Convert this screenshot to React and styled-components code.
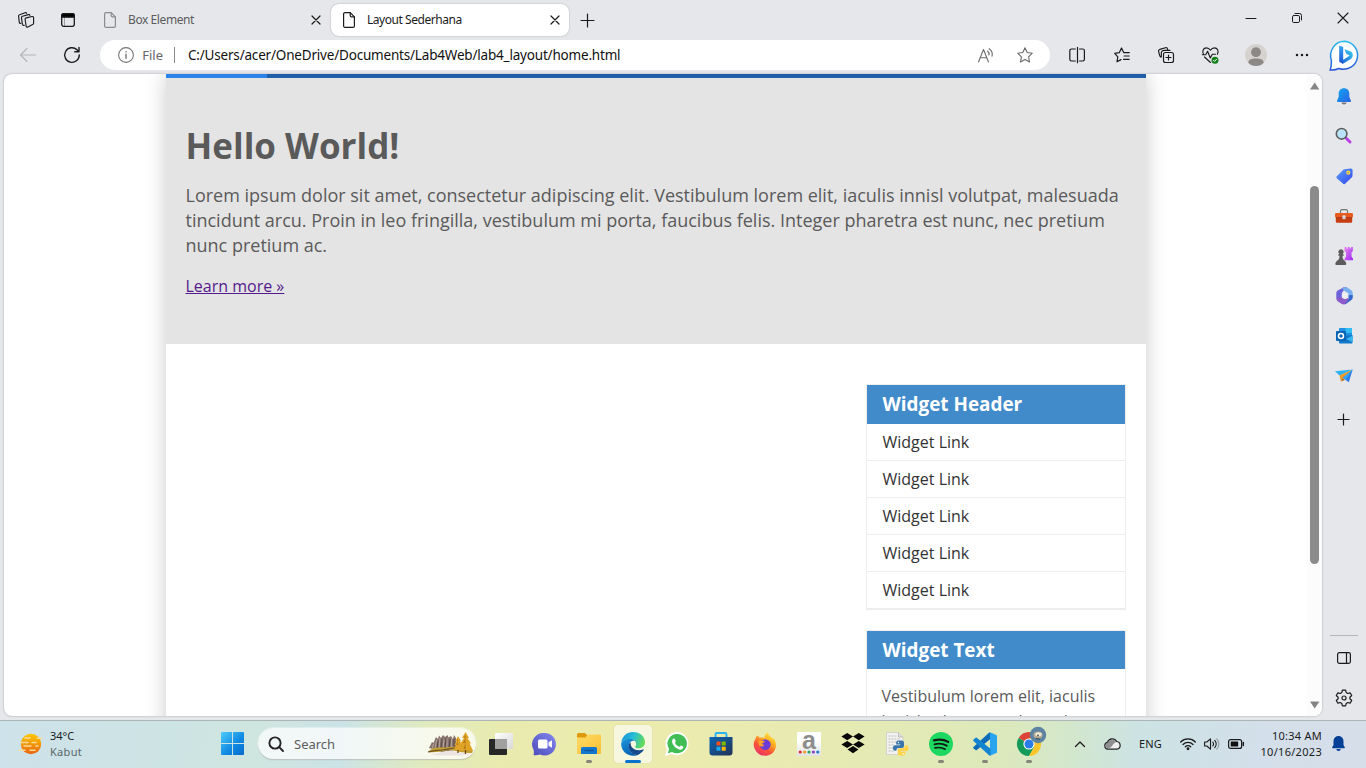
import React from "react";
import styled, { createGlobalStyle } from "styled-components";

const GlobalStyle = createGlobalStyle`
  * { box-sizing: border-box; }
  body { margin: 0; overflow: hidden; background: #e6e7eb; }
`;

const uiFont = `"Noto Sans", "Open Sans", sans-serif`;
const pageFont = `"Open Sans", "Noto Sans", sans-serif`;

const Screen = styled.div`
  width: 1366px;
  height: 768px;
  display: flex;
  flex-direction: column;
  overflow: hidden;
  background: #e6e7eb;
  font-family: ${uiFont};
  color: #1b1b1b;
`;

const Glyph = styled.svg`
  display: block;
  flex: none;
  overflow: visible;
`;

const Slot = styled.div`
  flex: none;
  width: ${(p) => p.$w}px;
  height: ${(p) => (p.$h ? `${p.$h}px` : "100%")};
  display: flex;
  align-items: center;
  justify-content: ${(p) => (p.$end ? "flex-end" : "center")};
`;

const Label = styled.span`
  white-space: nowrap;
  font-size: ${(p) => p.$size}px;
  letter-spacing: ${(p) => p.$track || 0}px;
  color: ${(p) => p.$color || "#1b1b1b"};
`;

/* ---------- tab strip ---------- */
const TabStrip = styled.header`
  flex: none;
  height: 40px;
  display: flex;
  align-items: flex-start;
  padding-left: 5px;
`;

const Tab = styled.div`
  flex: none;
  width: ${(p) => p.$w}px;
  height: 32px;
  margin-top: 4px;
  margin-left: ${(p) => p.$gap || 0}px;
  display: flex;
  align-items: center;
  padding: 0 6px 0 12px;
  border-radius: 8px;
  background: ${(p) => (p.$active ? "#fff" : "transparent")};
  box-shadow: ${(p) => (p.$active ? "0 0 2px rgba(0,0,0,.28)" : "none")};
`;

const TabTitle = styled(Label)`
  flex: 1;
  margin-left: 12px;
  line-height: 32px;
`;

const Spacer = styled.div`
  flex: 1;
`;

const Workspace = styled.div`
  flex: none;
  height: 680px;
  display: flex;
`;

const MainColumn = styled.main`
  width: 1322px;
  display: flex;
  flex-direction: column;
`;

const Toolbar = styled.div`
  flex: none;
  height: 34px;
  display: flex;
  align-items: flex-start;
  padding-left: 7px;
`;

const AddressBar = styled.div`
  flex: none;
  width: 950px;
  height: 30px;
  margin-left: 5px;
  margin-right: 5px;
  display: flex;
  align-items: center;
  background: #fff;
  border-radius: 15px;
  padding-left: 18px;
  padding-right: 5px;
`;

const Divider = styled.div`
  width: 1px;
  height: 16px;
  margin: 0 13px 0 11px;
  background: #8a8a8a;
`;

/* ---------- page ---------- */
const Viewport = styled.section`
  flex: none;
  height: 642px;
  width: 1318px;
  margin-left: 4px;
  display: flex;
  background: #fff;
  border-radius: 8px;
  overflow: hidden;
  box-shadow: 0 0 2px rgba(0, 0, 0, 0.35);
`;

const Document = styled.div`
  width: 1303px;
  height: 642px;
  overflow: hidden;
  display: flex;
  padding-left: 162px;
  font-family: ${pageFont};
`;

const Container = styled.div`
  width: 980px;
  height: 700px;
  flex: none;
  background: #fff;
  box-shadow: 0 0 20px #ccc;
`;

const NavStrip = styled.nav`
  height: 4px;
  background: #1f5faa;
`;

const NavActive = styled.div`
  width: 101px;
  height: 4px;
  background: #2b83ea;
`;

const Hero = styled.section`
  height: 266px;
  padding: 43px 20px 0 19.5px;
  background: #e4e4e4;
`;

const HeroTitle = styled.h1`
  margin: 0;
  font-size: 35px;
  line-height: 50px;
  color: #5a5a5a;
`;

const HeroText = styled.p`
  margin: 12px 0 16px;
  font-size: 18px;
  line-height: 25px;
  color: #5a5a5a;
  white-space: nowrap;
`;

const HeroLink = styled.a`
  display: block;
  font-size: 16px;
  line-height: 25px;
  color: #551a8b;
  text-decoration: underline;
`;

const Aside = styled.aside`
  width: 260px;
  margin: 40px 20px 0 auto;
  display: flex;
  flex-direction: column;
  gap: 20px;
`;

const Widget = styled.div`
  border: 1px solid #eee;
`;

const WidgetTitle = styled.h3`
  margin: 0;
  height: ${(p) => p.$h}px;
  padding-left: 15.5px;
  background: #428bca;
  color: #fff;
  font-size: 18.9px;
  line-height: 38px;
`;

const WidgetLink = styled.div`
  height: 37px;
  padding-left: 15.5px;
  border-bottom: 1px solid #eee;
  font-size: 16px;
  line-height: 36px;
  color: #333;
`;

const WidgetText = styled.p`
  margin: 0;
  padding: 15px 14.5px;
  font-size: 16px;
  line-height: 25px;
  color: #5a5a5a;
  white-space: nowrap;
`;

const ScrollTrack = styled.div`
  width: 15px;
  background: #fcfcfc;
  display: flex;
  flex-direction: column;
  align-items: center;
  padding: 8px 0 7px;
`;

const ScrollThumb = styled.div`
  width: 9px;
  height: 378px;
  margin-top: 96px;
  border-radius: 5px;
  background: #8b8b8b;
`;

/* ---------- side rail ---------- */
const Rail = styled.aside`
  width: 44px;
  display: flex;
  flex-direction: column;
  align-items: center;
  padding-bottom: 2px;
`;

const RailRule = styled.div`
  width: 28px;
  height: 1px;
  margin-bottom: 2px;
  background: #b3b6ba;
`;

/* ---------- taskbar ---------- */
const Taskbar = styled.footer`
  flex: none;
  height: 48px;
  display: flex;
  align-items: center;
  padding-bottom: 2px;
  border-top: 1px solid #adb5b6;
  background: linear-gradient(
    97deg,
    #cde2ea 0%,
    #cde4e4 13%,
    #cfe5df 19%,
    #cbe3e6 25%,
    #e0eabf 31%,
    #e9ebae 37%,
    #ecebae 48%,
    #e6eab3 62%,
    #dde9bb 73%,
    #d3e7cb 78%,
    #cce3e3 83%,
    #d3dfea 92%,
    #d6dee9 100%
  );
`;

const Weather = styled.div`
  width: 221px;
  height: 45px;
  display: flex;
  align-items: center;
  padding-left: 19px;
  gap: 7px;
`;

const Stack = styled.div`
  display: flex;
  flex-direction: column;
  align-items: ${(p) => p.$align || "flex-start"};
  line-height: 16px;
`;

const SearchBox = styled.div`
  width: 218px;
  height: 31px;
  margin: 0 3px 0 14px;
  display: flex;
  align-items: center;
  padding: 0 1px 0 10px;
  border-radius: 16px;
  background: rgba(255, 255, 255, 0.72);
  box-shadow: 0 0 0 1px rgba(255, 255, 255, 0.35), 0 1px 1px rgba(0, 0, 0, 0.3);
`;

const SearchLabel = styled(Label)`
  flex: 1;
  margin-left: 10px;
`;

const AppButton = styled.div`
  flex: none;
  width: 38px;
  height: 38px;
  margin: 0 3px;
  display: flex;
  flex-direction: column;
  align-items: center;
  justify-content: flex-end;
  border-radius: 4px;
  background: ${(p) => (p.$active ? "rgba(255,255,255,.6)" : "transparent")};
  box-shadow: ${(p) => (p.$active ? "0 0 1px rgba(0,0,0,.2)" : "none")};
`;

const RunMark = styled.div`
  width: ${(p) => (p.$mode === "active" ? 16 : 6)}px;
  height: 3px;
  margin-top: 4px;
  border-radius: 2px;
  background: ${(p) =>
    p.$mode === "active" ? "#0873ce" : p.$mode === "open" ? "#858678" : "transparent"};
`;

const TrayItem = styled.div`
  flex: none;
  margin-left: ${(p) => p.$gap}px;
  display: flex;
  align-items: center;
`;

/* ---------- line icons ---------- */
const Line = ({ w, h, color = "#1b1b1b", sw = 1.1, children }) => (
  <Glyph
    width={w}
    height={h}
    viewBox={`0 0 ${w} ${h}`}
    fill="none"
    stroke={color}
    strokeWidth={sw}
    strokeLinecap="round"
    strokeLinejoin="round"
  >
    {children}
  </Glyph>
);

const FileIcon = ({ color }) => (
  <Line w={12} h={16} color={color} sw={1.2}>
    <path d="M2 .6h5.2l4.2 4.2v9.1a1.4 1.4 0 0 1-1.4 1.4H2A1.4 1.4 0 0 1 .6 13.9V2A1.4 1.4 0 0 1 2 .6z" />
    <path d="M7.2.8v2.8A1.2 1.2 0 0 0 8.4 4.8h2.8" />
  </Line>
);

const CloseIcon = ({ s = 8, sw = 1.2 }) => (
  <Line w={s} h={s} sw={sw}>
    <path d={`M0 0L${s} ${s}M${s} 0L0 ${s}`} />
  </Line>
);

const PlusIcon = ({ s = 13 }) => (
  <Line w={s} h={s} sw={1.2}>
    <path d={`M${s / 2} 0V${s}M0 ${s / 2}H${s}`} />
  </Line>
);

const WorkspacesIcon = () => (
  <Line w={16} h={16} sw={1.15}>
    <path d="M8.3 5.9L14 4.500c.9-.2 1.600.3 1.600 1.100v5.600c0 .7-.4 1.100-1 1.400l-4.700 2.300c-.8.400-1.800 0-1.800-.9L7.100 7.400c-.1-.7.400-1.300 1.200-1.500z" />
    <path d="M6.300 13.300c-1 .3-1.700-.1-1.900-.9L3.500 5.800c-.1-.8.300-1.300 1-1.500l5.900-1.700c.7-.2 1.300 0 1.500.7" />
    <path d="M2.900 11.300c-.9.200-1.500-.1-1.600-.9L.6 4.200c-.1-.8.300-1.300 1-1.500L7 .7c.7-.2 1.400 0 1.600.6" />
  </Line>
);

const TabActionsIcon = () => (
  <Line w={14} h={14} sw={1.3}>
    <rect x=".7" y=".7" width="12.6" height="12.6" rx="2" />
    <path d="M.7 4.200V2.500A1.800 1.800 0 0 1 2.500.7h9a1.800 1.800 0 0 1 1.800 1.800v1.700z" fill="#000" />
    <path d="M3.500 4v9" strokeWidth=".7" opacity=".5" />
  </Line>
);

const starPath =
  "M8 .8l2.200 4.700 5.100.7-3.700 3.600.9 5.100L8 12.400l-4.500 2.500.9-5.100L.7 6.200l5.100-.7z";

/* ---------- colour icons ---------- */
const BingIcon = () => (
  <Glyph width="31" height="32" viewBox="0 0 31 32">
    <defs>
      <linearGradient id="bingRing" x1="0" y1="0" x2="0" y2="1">
        <stop offset="0" stopColor="#25bdf0" />
        <stop offset="1" stopColor="#2b55d8" />
      </linearGradient>
      <linearGradient id="bingStem" x1="0" y1="0" x2="0" y2="1">
        <stop offset="0" stopColor="#35a5f5" />
        <stop offset="1" stopColor="#1c52d2" />
      </linearGradient>
      <linearGradient id="bingBowl" x1="0" y1="1" x2="1" y2="0">
        <stop offset="0" stopColor="#1f56d6" />
        <stop offset="1" stopColor="#38d0ec" />
      </linearGradient>
    </defs>
    <path
      d="M15.500 1.300a14 14 0 1 1-5.500 27.200C7.500 29.700 4 30.200 1.200 30 2.100 27.300 2.500 24.800 2.400 20.800-.8 10.800 6 1.300 15.500 1.300z"
      fill="#fff"
      stroke="url(#bingRing)"
      strokeWidth="1.5"
    />
    <path d="M14 23.800l7.600-4.600c1.300-.9 2.200-2.100 2.200-4.100s-.9-3.200-2.700-3.900L15.500 9.300l1.800 4.500 3.400 1.600-6.700 4.700-3.800 1.700z" fill="url(#bingBowl)" />
    <path d="M10.200 5.500l4 1.500v13.300l-.2 3.500-3.800-2.200z" fill="url(#bingStem)" />
  </Glyph>
);

const BellIcon = () => (
  <Glyph width="14" height="17" viewBox="0 0 14 17">
    <defs>
      <linearGradient id="bell" x1="0" y1="0" x2="1" y2="1">
        <stop offset="0" stopColor="#12a6ee" />
        <stop offset="1" stopColor="#2a62e4" />
      </linearGradient>
    </defs>
    <path d="M4.500 14.500h5a2.500 2 0 0 1-5 0z" fill="#777" />
    <path d="M7 .2c3.200 0 5.300 2.200 5.300 5.300v3.600l1.600 3.500c.3.700-.1 1.400-.8 1.400H.9c-.7 0-1.100-.7-.8-1.400l1.600-3.500V5.500C1.700 2.400 3.800.2 7 .2z" fill="url(#bell)" />
  </Glyph>
);

const LensIcon = () => (
  <Glyph width="19" height="19" viewBox="0 0 19 19">
    <path d="M10 10l2 2" stroke="#555" strokeWidth="2" />
    <path d="M11.500 11.500l3.500 3.500" stroke="#bb3fe6" strokeWidth="3" strokeLinecap="round" />
    <circle cx="6.600" cy="6.800" r="5.300" fill="#b9e1f7" stroke="#5c5d5c" strokeWidth="1.600" />
  </Glyph>
);

const TagIcon = () => (
  <Glyph width="17" height="17" viewBox="0 0 17 17">
    <defs>
      <linearGradient id="tag" x1="0" y1="0" x2="1" y2="1">
        <stop offset="0" stopColor="#5aa2fa" />
        <stop offset="1" stopColor="#3343ee" />
      </linearGradient>
    </defs>
    <path d="M8.500 1.300L14.600.5c1.200-.1 2 .7 2 1.900l-.1 5.400c0 .6-.2 1-.6 1.400l-6.500 6.400c-.8.800-1.700.8-2.500 0L1 10.500c-.8-.8-.8-1.700 0-2.500l6-6c.4-.4.900-.6 1.500-.7z" fill="url(#tag)" />
    <circle cx="12.300" cy="4.700" r="2.100" fill="#fbd33e" />
    <circle cx="12.300" cy="4.700" r=".8" fill="#8c9a9a" />
  </Glyph>
);

const ToolboxIcon = () => (
  <Glyph width="18" height="14" viewBox="0 0 18 14">
    <path d="M5.500 4V2A1.400 1.400 0 0 1 6.900.7h4.200A1.400 1.400 0 0 1 12.500 2v2" fill="none" stroke="#757575" strokeWidth="1.200" />
    <rect x=".8" y="6" width="16.400" height="7.700" rx="1.200" fill="#c63d11" />
    <rect x="0" y="4" width="18" height="4.500" rx="1.200" fill="#e75b20" />
    <path d="M1 8.700h16" stroke="#8f2d12" strokeWidth=".6" />
    <rect x="7.400" y="6.300" width="3.200" height="4" rx="1" fill="#d4d8d9" />
  </Glyph>
);

const ChessIcon = () => (
  <Glyph width="18" height="18" viewBox="0 0 18 18">
    <defs>
      <linearGradient id="rook" x1="0" y1="0" x2="1" y2="1">
        <stop offset="0" stopColor="#e98bef" />
        <stop offset="1" stopColor="#9b26f3" />
      </linearGradient>
    </defs>
    <path d="M9.500 0h2v1.600h1.300V0h2v1.600h1.300V0h1.700v4.200l-1.300 1v4.300l1.500 2.300v1.400H9.500v-1.400L11 9.500V5.200l-1.500-1z" fill="url(#rook)" />
    <path d="M6 2.200a2.600 2.600 0 0 1 1.700 4.600l1 .9v1H7.500c0 2.700.6 4 2.500 5.200l1.200 2.200v1.200c0 .4-.3.700-.7.700H1.100a.7.700 0 0 1-.7-.7v-1.200L1.700 14C3.900 12.700 4.500 11.400 4.500 8.700H3.300v-1l1-.9A2.600 2.600 0 0 1 6 2.200z" fill="#5d5b5b" />
  </Glyph>
);

const M365Icon = () => (
  <Glyph width="17" height="18" viewBox="0 0 17 18">
    <path d="M6 1.200A3 3 0 0 1 8 .3h3.500L8.400 2.400 5.800 6v5.500L3.200 14 1.800 13A3.400 3.400 0 0 1 .3 10.200V6A3 3 0 0 1 1.700 3.500z" fill="#6c63d9" />
    <path d="M6 1.200l3-.9c1-.2 1.700 0 2.500.5l3.800 2.500A3 3 0 0 1 16.700 6v4.500l-4.200-2.200V6.200L8.700 4z" fill="#77aef0" />
    <path d="M16.700 8v2.500a3 3 0 0 1-1.400 2.500l-5 3.800c-.9.600-2 .7-3 .3l5.200-5V8.200z" fill="#3566cb" />
    <path d="M.4 11l5.400-.7 3 2 3.300-1.400v2.800l-3.300 3.300a3 3 0 0 1-3 .1l-4.200-2.900A3.500 3.500 0 0 1 .4 11z" fill="#8d5bc9" />
    <circle cx="8.700" cy="8.800" r="2.900" fill="#eef0f4" />
  </Glyph>
);

const OutlookIcon = () => (
  <Glyph width="17" height="16" viewBox="0 0 17 16">
    <path d="M4 0h11a1 1 0 0 1 1 1v9H3V1a1 1 0 0 1 1-1z" fill="#1c92e0" />
    <path d="M9.500 0H15a1 1 0 0 1 1 1v4H9.500z" fill="#31bdf1" />
    <path d="M3 8l13.500-1v7.500a1 1 0 0 1-1 1H4a1 1 0 0 1-1-1z" fill="#1278c9" />
    <path d="M16.700 7.500v6.800L10.300 11z" fill="#36b7ee" />
    <rect x="0" y="3" width="10" height="10" rx="1" fill="#0764b7" />
    <circle cx="5" cy="8" r="2.500" fill="none" stroke="#fff" strokeWidth="1.500" />
  </Glyph>
);

const PlaneIcon = () => (
  <Glyph width="18" height="14" viewBox="0 0 18 14">
    <path d="M0 2.200L17.700.5 4.500 6.600z" fill="#2eb1ef" />
    <path d="M17.700.5L4.500 6.600l1.400 5.900 2-3.700z" fill="#eb9a27" />
    <path d="M5.900 12.500l4-1.500-2-2.200z" fill="#b56a1b" />
    <path d="M17.700.5L13.800 13.200 7.900 8.800z" fill="#287ce9" />
    <path d="M17.700.5L7.900 8.800l2.900 2.100z" fill="#35a4f3" />
  </Glyph>
);

const PanelIcon = () => (
  <Line w={14} h={12} sw={1.2}>
    <rect x=".6" y=".6" width="12.800" height="10.800" rx="1.800" />
    <path d="M9.500 .6v10.800" />
  </Line>
);

const GearIcon = () => (
  <Line w={18} h={18} sw={1.2}>
    <path d="M7.400 1.200h3.200l.6 2.400 1.500.9 2.400-.7 1.600 2.700-1.800 1.700v1.600l1.800 1.700-1.600 2.700-2.400-.7-1.500.9-.6 2.400H7.400l-.6-2.400-1.500-.9-2.400.7-1.600-2.700 1.800-1.700V8.200L1.300 6.500l1.600-2.700 2.400.7 1.500-.9z" />
    <circle cx="9" cy="9" r="2" />
  </Line>
);

const Avatar = () => (
  <Glyph width="22" height="22" viewBox="0 0 22 22">
    <circle cx="11" cy="11" r="11" fill="#d5d2cf" />
    <circle cx="11" cy="8.200" r="4.900" fill="#8c8886" />
    <path d="M3.300 18.700C3.600 15.600 6 14.500 11 14.500s7.400 1.100 7.700 4.200A11 11 0 0 1 11 22a11 11 0 0 1-7.700-3.300z" fill="#8c8886" />
  </Glyph>
);

const HeartIcon = () => (
  <Line w={17} h={17} sw={1.15}>
    <path d="M1.600 7.500C-.3 4.200 1.300.8 4.400.8c2 0 3.200 1.200 4 2.400.8-1.200 2-2.400 4-2.400 3.100 0 4.600 3.300 3 6.400" />
    <path d="M.3 7.700h3.400l1.900-3.400L8.300 11l2-3.800h3.200" />
    <path d="M2.500 10l6 5.500" />
    <circle cx="13" cy="13.200" r="3.500" fill="#13801a" stroke="none" />
    <path d="M11.500 13.400l1 1 2.100-2.200" stroke="#fff" strokeWidth="1" />
  </Line>
);

const WeatherIcon = () => (
  <Glyph width="24" height="22" viewBox="0 0 24 22">
    <defs>
      <linearGradient id="sun" x1="0" y1="0" x2="0" y2="1">
        <stop offset="0" stopColor="#fbc900" />
        <stop offset="1" stopColor="#ea6413" />
      </linearGradient>
    </defs>
    <circle cx="12" cy="11" r="10.200" fill="url(#sun)" />
    <g stroke="#f7dc9c" strokeWidth="1.500" strokeLinecap="round">
      <path d="M6 5h5M18 5.200h5M2 9.500h7M13 9.500h4M5 13h7M17 13h2M0 17.200h6M11 17.200h5" />
    </g>
  </Glyph>
);

const StartIcon = () => (
  <Glyph width="23" height="23" viewBox="0 0 23 23">
    <defs>
      <linearGradient id="win" x1="0" y1="0" x2="1" y2="1">
        <stop offset="0" stopColor="#4fcdfb" />
        <stop offset=".55" stopColor="#128ce3" />
        <stop offset="1" stopColor="#0569cc" />
      </linearGradient>
    </defs>
    <path d="M1 0h10v11H0V1a1 1 0 0 1 1-1zM12 0h10a1 1 0 0 1 1 1v10H12zM0 12h11v11H1a1 1 0 0 1-1-1zM12 12h11v10a1 1 0 0 1-1 1H12z" fill="url(#win)" />
  </Glyph>
);

const ForestArt = () => (
  <Glyph width="48" height="24" viewBox="0 0 48 24">
    <path d="M2 16l3-6 1.500 1L9 5l2 2 1-3.500 2 2.500 2-3 2 2 2.500-2 1 2.500L24 4l2 3 1-4 2 3v12l-14 2z" fill="#85736c" />
    <path d="M8 17l1.500-9M12 17l1-11M16 17l1-10M20 17V6M24 17l1-11M5 17l1.500-5" stroke="#bdaaa2" strokeWidth=".9" />
    <path d="M10 17l1-8M14 17l1-10M18 17l1-11M22 17l1-10M27 16V7" stroke="#4f4344" strokeWidth=".9" />
    <path d="M1 20c3-4 8-5 14-4.500 5 .2 10-1.500 16-1l15 3.500-1 3c-8 0-12-1-18-2.500-9-1-17 3-26 1.500z" fill="#c49d31" />
    <path d="M3 22c8 0 15-4 23-3 7 1.500 11 3 18 2.500-5 2-11 2-20 2-8 0-15 .5-21-1.500z" fill="#eee3e3" />
    <path d="M1 20c4-1.500 9-1.500 14-2s9-2 14-2" fill="none" stroke="#6d5524" strokeWidth="1.200" />
    <path d="M31 4l3 5h-1l2.500 4H34l2 5h-9l2-5h-1.500l2-4h-1zM38.500 0l3.500 6h-1.500l3.500 5.500h-1.500l3.500 7H31.500l3.500-7h-1.500L37 6h-2z" fill="#dfa326" />
    <path d="M38.500 2l-1.500 4h1.500l-2.500 5h2.500l-2 6h2zM31 6l-1 3h1l-1.500 4H31z" fill="#b27717" />
    <path d="M31 18v3M38.500 18v4" stroke="#6b4610" strokeWidth="1.300" />
  </Glyph>
);

const TaskViewIcon = () => (
  <Glyph width="24" height="24" viewBox="0 0 24 24">
    <defs>
      <linearGradient id="tvw" x1="0" y1="0" x2="1" y2="1">
        <stop offset="0" stopColor="#fff" />
        <stop offset="1" stopColor="#d8d8d8" />
      </linearGradient>
    </defs>
    <rect x="0" y="7" width="18" height="16" rx="1" fill="#262828" />
    <rect x="6" y="1" width="18" height="16" rx="1" fill="url(#tvw)" />
    <path d="M6 7h12v10H6z" fill="#a0a19f" />
  </Glyph>
);

const ChatIcon = () => (
  <Glyph width="24" height="24" viewBox="0 0 24 24">
    <defs>
      <linearGradient id="chat" x1="1" y1="0" x2="0" y2="1">
        <stop offset="0" stopColor="#8488ee" />
        <stop offset="1" stopColor="#4b4cba" />
      </linearGradient>
    </defs>
    <path d="M11.500 1a11.300 11.300 0 1 1-4.500 21.600c-2 .5-4.500.9-6.500.4.600-2 .5-3.500.1-5.200A11.300 11.300 0 0 1 11.500 1z" fill="url(#chat)" />
    <rect x="5" y="7.500" width="9.500" height="9" rx="1.500" fill="#fff" />
    <path d="M15.500 10.500l2.700-2a.5.500 0 0 1 .8.400v6.200a.5.500 0 0 1-.8.400l-2.700-2z" fill="#fff" />
  </Glyph>
);

const FolderIcon = () => (
  <Glyph width="24" height="24" viewBox="0 0 24 24">
    <defs>
      <linearGradient id="fold" x1="0" y1="0" x2="1" y2="1">
        <stop offset="0" stopColor="#ffdc68" />
        <stop offset="1" stopColor="#f9be32" />
      </linearGradient>
    </defs>
    <path d="M0 2.500A1.500 1.500 0 0 1 1.500 1H8l2.500 2.500L8.500 6H0z" fill="#dd9b0c" />
    <path d="M0 5.500h8.500l2.300-3H23a1 1 0 0 1 1 1V21a1 1 0 0 1-1 1H1a1 1 0 0 1-1-1z" fill="url(#fold)" />
    <path d="M4 22v-5.500A1.500 1.500 0 0 1 5.500 15h13a1.500 1.500 0 0 1 1.500 1.500V22z" fill="#1377cd" />
    <path d="M7.500 18.500h9" stroke="#115799" strokeWidth="1.500" />
  </Glyph>
);

const EdgeIcon = () => (
  <Glyph width="24" height="24" viewBox="0 0 24 24">
    <defs>
      <linearGradient id="edgeTop" x1="0" y1=".2" x2="1" y2=".5">
        <stop offset="0" stopColor="#198fdb" />
        <stop offset=".5" stopColor="#27bed3" />
        <stop offset="1" stopColor="#64db58" />
      </linearGradient>
      <linearGradient id="edgeSide" x1="0" y1="0" x2=".5" y2="1">
        <stop offset="0" stopColor="#1b95dc" />
        <stop offset="1" stopColor="#0b62b5" />
      </linearGradient>
    </defs>
    <path d="M.2 11C.8 4.600 5.800 0 12 0c7 0 12 4.800 12 10.300 0 3.700-2.800 6-6.100 6-2.300 0-3.700-.7-3.700-1.600 0-.7.900-1 .9-2.800 0-2.600-2.700-5-6.300-5C4.900 6.900 1.700 8.500.2 11z" fill="url(#edgeTop)" />
    <path d="M.1 11.500C1.500 8.500 4.900 6.700 8.800 6.700c2.300 0 4.200 1 5.200 2.300-3.300-.8-6.200 1.700-6.200 5 0 4.700 4 9 9 8.900A12 12 0 0 1 .1 11.500z" fill="url(#edgeSide)" />
    <path d="M9.800 10.200c-2 1-2.600 3-2 5.500 1 4.200 4.800 7.700 9 7.200 2.500-1 4.500-2.800 5.900-4.900.3-.5-.2-.9-.7-.6-1.200.5-2.500.8-4 .8-4.900 0-9.100-3.200-8.200-8z" fill="#17498d" />
  </Glyph>
);

const WhatsAppIcon = () => (
  <Glyph width="24" height="24" viewBox="0 0 24 24">
    <path d="M12.200 0a11.600 11.600 0 1 1-5.500 22L0 24l2-6.700A11.600 11.600 0 0 1 12.200 0z" fill="#fff" />
    <path d="M12.200 1.900a9.700 9.700 0 1 1-5 18L2.800 21.200l1.300-4.300A9.700 9.700 0 0 1 12.200 1.900z" fill="#41bd55" />
    <path d="M9 6.500c.5 0 .7.200.9.700l.8 2c.2.500-.9 1.500-.7 1.900 1 1.700 2.300 2.900 4.200 3.700.5.200 1.300-1.500 1.800-1.300l2.100 1.100c.4.200.3.500.2 1-.4 1.500-2 2.300-3.200 2.100-4.200-.8-7.500-4.400-8-7.600-.2-1.400.5-3.600 1.900-3.600z" fill="#fff" />
  </Glyph>
);

const StoreIcon = () => (
  <Glyph width="24" height="24" viewBox="0 0 24 24">
    <defs>
      <linearGradient id="store" x1="0" y1="0" x2="1" y2="1">
        <stop offset="0" stopColor="#0b67b5" />
        <stop offset="1" stopColor="#233154" />
      </linearGradient>
    </defs>
    <path d="M6.500 6V2.500A1.500 1.500 0 0 1 8 1h8a1.500 1.500 0 0 1 1.500 1.500V6" fill="none" stroke="#28b2ee" strokeWidth="1.900" />
    <path d="M.5 5h23v15.500a3 3 0 0 1-3 3h-17a3 3 0 0 1-3-3z" fill="url(#store)" />
    <path d="M7.500 9.500h4v4h-4z" fill="#f25022" />
    <path d="M12.700 9.500h4v4h-4z" fill="#7fba00" />
    <path d="M7.500 14.700h4v4h-4z" fill="#1ba9ef" />
    <path d="M12.700 14.700h4v4h-4z" fill="#ffb900" />
  </Glyph>
);

const FirefoxIcon = () => (
  <Glyph width="24" height="24" viewBox="0 0 24 24">
    <defs>
      <linearGradient id="fox" x1=".8" y1="0" x2=".2" y2="1">
        <stop offset="0" stopColor="#fff04a" />
        <stop offset=".35" stopColor="#ffad20" />
        <stop offset=".65" stopColor="#ff5437" />
        <stop offset="1" stopColor="#e22b72" />
      </linearGradient>
    </defs>
    <path d="M4.500 3.500l2.300 2.200c1.600-.5 3-.4 4.700.2C11.300 3.400 13 1.200 15 .2c.1 2.500 1.700 3.600 4 5.800l1.300.7 1 .5c3.300 5.700 1.400 12-3 14.900-4.800 3-11 2-14.600-2.200C-.1 15.300-.1 10.400 2.500 7c.1-1.400.9-2.600 2-3.500z" fill="url(#fox)" />
    <path d="M11.200 7.600c4.500-.5 7 2.600 6.400 6-.6 3.100-3.500 5-6.500 4.300-2.800-.6-4.600-3-4.300-5.600 1.300 1.700 3.500 1.300 4.800.3-1.700.1-2.700-.6-3-1.700-.4-1.400.6-3.100 2.600-3.300z" fill="#6a3bd5" />
    <path d="M5.700 9.200c2-.6 5.200-.5 6.300.5-.4 1.100-2.800.8-3 2.300.2 1 1.200 1.600 2.600 1.500-1.700 1.500-4.700 1.300-5.500-.5-.6-1.200-.6-2.600-.4-3.800z" fill="#ffa22b" />
  </Glyph>
);

const ATile = styled.div`
  width: 24px;
  height: 24px;
  display: flex;
  flex-direction: column;
  align-items: center;
  justify-content: flex-end;
  padding-bottom: 2px;
  background: linear-gradient(#fff 35%, #e1e2e1);
`;

const ALetter = styled.span`
  height: 16px;
  font: bold 25px/12px "Liberation Sans", sans-serif;
  color: #8d8d8d;
`;

const AmazonIcon = () => (
  <ATile>
    <ALetter>a</ALetter>
    <Glyph width="22" height="4" viewBox="0 0 22 4">
      {["#e02a31", "#f39b24", "#26a65b", "#8a44c5", "#1a7bd0"].map((c, i) => (
        <circle key={c} cx={2.2 + i * 4.4} cy="2" r="1.6" fill={c} />
      ))}
    </Glyph>
  </ATile>
);

const DropboxIcon = () => (
  <Glyph width="24" height="24" viewBox="0 0 24 24" fill="#080808">
    <path d="M6.200 1L12 4.600 6.200 8.200.4 4.600zM17.800 1l5.800 3.600-5.800 3.600L12 4.600zM6.200 8.900l5.800 3.600-5.800 3.600L.4 12.500zM17.800 8.900l5.800 3.600-5.800 3.600-5.800-3.600zM12 14l5.400 3.500L12 21.300l-5.400-3.800z" />
  </Glyph>
);

const PythonFileIcon = () => (
  <Glyph width="24" height="24" viewBox="0 0 24 24">
    <path d="M1.500.5h12l4.500 4.500v17.500H1.500z" fill="#f2f2f0" stroke="#c9c9c6" strokeWidth=".7" />
    <path d="M13.500.5V5H18" fill="#ddd" stroke="#aaa" strokeWidth=".7" />
    <path d="M3.500 4h8M3.500 7h11M3.500 10h9M3.500 13h6M3.500 16h5M3.500 19h5" stroke="#bbbcb9" strokeWidth="1" strokeDasharray="2 1" />
    <path d="M13.500 8.500h3.300a2.200 2.200 0 0 1 2.200 2.200v3a2.200 2.200 0 0 1-2.200 2.200h-3.200a2.200 2.200 0 0 0-2.200 2.200v.7h-1.200c-3 0-3-5.500 0-5.500h5v-.8h-4v-1.800c0-1.400 1-2.200 2.300-2.200z" fill="#3975ab" />
    <path d="M17.800 23.500h-3a2.200 2.200 0 0 1-2.200-2.200v-3a2 2 0 0 1 2-2h3.200a2.200 2.200 0 0 0 2.200-2.200v-.9h1.300c3 0 3 6 0 6h-5v.8h4v1.300a2.200 2.200 0 0 1-2.500 2.200z" fill="#ffd349" />
    <circle cx="13.500" cy="10.500" r=".7" fill="#fff" />
    <circle cx="18.200" cy="21.700" r=".7" fill="#fff" />
  </Glyph>
);

const SpotifyIcon = () => (
  <Glyph width="24" height="24" viewBox="0 0 24 24">
    <circle cx="12" cy="12" r="12" fill="#1ed760" />
    <g fill="none" stroke="#101913" strokeLinecap="round">
      <path d="M5 8.400c4.700-1.300 9.900-.9 14.200 1.500" strokeWidth="2.200" />
      <path d="M5.500 12.300c4.100-1.100 8.500-.7 12.200 1.400" strokeWidth="1.900" />
      <path d="M6 15.900c3.600-.8 7.100-.5 10.200 1.300" strokeWidth="1.600" />
    </g>
  </Glyph>
);

const CodeIcon = () => (
  <Glyph width="24" height="24" viewBox="0 0 24 24">
    <path d="M17 .3L23.300 3a1.200 1.200 0 0 1 .7 1.100v15.800a1.200 1.200 0 0 1-.7 1.100L17 23.700z" fill="#29a4ee" />
    <path d="M17 .3v6.900L3.800 18.100a1 1 0 0 1-1.200 0L.5 16.500a1 1 0 0 1 0-1.500L16 .7z" fill="#0f6cb8" />
    <path d="M.5 7.500l2.100-1.700a1 1 0 0 1 1.200 0L17.500 16.700v6.900a1.500 1.500 0 0 1-1.500-.4L.5 9a1 1 0 0 1 0-1.500z" fill="#1384d0" />
  </Glyph>
);

const ChromeIcon = () => (
  <Glyph width="24" height="24" viewBox="0 0 24 24">
    <path d="M12 12L1.600 6A12 12 0 0 1 22.400 6z" fill="#db4437" />
    <path d="M12 12h-.1L1.600 6A12 12 0 0 0 12 24l5.200-9z" fill="#159b59" />
    <path d="M12 12l5.200 3L12 24A12 12 0 0 0 22.400 6H12z" fill="#fbc52c" />
    <circle cx="12" cy="12" r="5.600" fill="#fff" />
    <circle cx="12" cy="12" r="4.500" fill="#2b7be9" />
    <circle cx="21" cy="3" r="8.200" fill="#5d83a2" />
    <ellipse cx="21" cy="3" rx="4.600" ry="3.500" fill="#b4ab91" />
    <ellipse cx="21.500" cy="2.200" rx="3.200" ry="2" fill="#eee8d6" />
    <circle cx="21" cy="3.400" r=".9" fill="#4f5048" />
    <path d="M19 6.300l4 1" stroke="#35444b" strokeWidth="1" />
  </Glyph>
);

const apps = [
  { name: "task-view", icon: TaskViewIcon },
  { name: "chat", icon: ChatIcon },
  { name: "files", icon: FolderIcon, mode: "open" },
  { name: "edge", icon: EdgeIcon, mode: "active" },
  { name: "whatsapp", icon: WhatsAppIcon },
  { name: "store", icon: StoreIcon },
  { name: "firefox", icon: FirefoxIcon },
  { name: "amazon", icon: AmazonIcon },
  { name: "dropbox", icon: DropboxIcon },
  { name: "python", icon: PythonFileIcon },
  { name: "spotify", icon: SpotifyIcon, mode: "open" },
  { name: "code", icon: CodeIcon, mode: "open" },
  { name: "chrome", icon: ChromeIcon, mode: "open" },
];

const railIcons = [BellIcon, LensIcon, TagIcon, ToolboxIcon, ChessIcon, M365Icon, OutlookIcon, PlaneIcon];

const ScrollArrow = ({ down }) => (
  <Glyph width="10" height="8" viewBox="0 0 10 8">
    <path d={down ? "M0 .500h9.400L4.700 7.600z" : "M0 7.500h9.400L4.700 .4z"} fill="#858585" />
  </Glyph>
);

export default function App() {
  return (
    <Screen>
      <GlobalStyle />
      <TabStrip>
        <Slot $w={42}><WorkspacesIcon /></Slot>
        <Slot $w={42}><TabActionsIcon /></Slot>
        <Tab $w={239} $gap={3}>
          <FileIcon color="#8b8b8c" />
          <TabTitle $size={12} $track={-0.42} $color="#5c5c5d">Box Element</TabTitle>
          <Slot $w={19}><CloseIcon /></Slot>
        </Tab>
        <Tab $w={238} $active>
          <FileIcon color="#1b1b1b" />
          <TabTitle $size={12} $track={-0.46}>Layout Sederhana</TabTitle>
          <Slot $w={17}><CloseIcon /></Slot>
        </Tab>
        <Slot $w={37}><PlusIcon s={13} /></Slot>
        <Spacer />
        <Slot $w={46} $h={36}>
          <Line w={10} h={2} sw={1}><path d="M0 1.500h10" /></Line>
        </Slot>
        <Slot $w={46} $h={36}>
          <Line w={10} h={10} sw={1}>
            <rect x=".5" y="2.500" width="7" height="7" rx="1.300" />
            <path d="M3 .5h4.500a2 2 0 0 1 2 2V7" />
          </Line>
        </Slot>
        <Slot $w={46} $h={36}><CloseIcon s={10} sw={1.1} /></Slot>
      </TabStrip>

      <Workspace>
        <MainColumn>
          <Toolbar>
            <Slot $w={42} $h={30}>
              <Line w={16} h={14} color="#b4b5b8" sw={1.1}><path d="M15.500 7H.5M7 .5L.5 7 7 13.500" /></Line>
            </Slot>
            <Slot $w={46} $h={30}>
              <Line w={16} h={16} sw={1.4}>
                <path d="M15.300 8A7.300 7.300 0 1 1 13 2.700l1.800 1.700M15 .5v4.200h-4.200" />
              </Line>
            </Slot>
            <AddressBar>
              <Line w={16} h={16} color="#767676" sw={1.1}>
                <circle cx="8" cy="8" r="7.400" />
                <path d="M8 7.200v4M8 4.700v.2" strokeWidth="1.400" />
              </Line>
              <Slot $w={29} $end><Label $size={13} $color="#666">File</Label></Slot>
              <Divider />
              <Label $size={13.5} $track={-0.19} $color="#111">
                C:/Users/acer/OneDrive/Documents/Lab4Web/lab4_layout/home.html
              </Label>
              <Spacer />
              <Slot $w={39}>
                <Line w={16} h={15} color="#6b6b6b" sw={1.1}>
                  <path d="M.5 14L5.500 1.500 10.500 14M2.300 9.700h6.400M9.500 3a4 4 0 0 1 1.500 4M11.200 .7a7 7 0 0 1 2.800 7.500" />
                </Line>
              </Slot>
              <Slot $w={40}><Line w={16} h={16} color="#6b6b6b"><path d={starPath} /></Line></Slot>
            </AddressBar>
            <Slot $w={44} $h={30}>
              <Line w={16} h={16} sw={1.2}>
                <path d="M6.300 2H2.500A1.700 1.700 0 0 0 .8 3.700v8.600A1.700 1.700 0 0 0 2.500 14h3.800M8.500 .3v15.400M10.500 2h3.200a1.700 1.700 0 0 1 1.700 1.700v8.600a1.700 1.700 0 0 1-1.700 1.700h-3.200" />
              </Line>
            </Slot>
            <Slot $w={45} $h={30}>
              <Line w={16} h={16} sw={1.2}>
                <path d="M7 12.600l-4 2.200.8-5L.7 6.300l4.700-.7L7.500 1l2.200 4.600h5.600M10.200 9h5M9.500 12.300h5.700" />
              </Line>
            </Slot>
            <Slot $w={44} $h={30}>
              <Line w={16} h={16} sw={1.15}>
                <rect x="5.500" y="5.500" width="10" height="10" rx="2" />
                <path d="M10.500 8v5M8 10.500h5M3 10.200A2 2 0 0 1 1.800 8.900L.6 4.500A1.700 1.700 0 0 1 1.800 2.400L7.400.7a1.700 1.700 0 0 1 2.100 1.200l.4 1.300M3.300 9.800V6a2.700 2.700 0 0 1 2.700-2.700h6" />
              </Line>
            </Slot>
            <Slot $w={44} $h={31}><HeartIcon /></Slot>
            <Slot $w={48} $h={30}><Avatar /></Slot>
            <Slot $w={43} $h={30}>
              <Glyph width="14" height="4" viewBox="0 0 14 4" fill="#1b1b1b">
                <circle cx="2" cy="2" r="1.250" /><circle cx="7" cy="2" r="1.250" /><circle cx="12" cy="2" r="1.250" />
              </Glyph>
            </Slot>
          </Toolbar>

          <Viewport>
            <Document>
              <Container>
                <NavStrip><NavActive /></NavStrip>
                <Hero>
                  <HeroTitle>Hello World!</HeroTitle>
                  <HeroText>
                    Lorem ipsum dolor sit amet, consectetur adipiscing elit. Vestibulum lorem elit, iaculis innisl volutpat, malesuada
                    <br />
                    tincidunt arcu. Proin in leo fringilla, vestibulum mi porta, faucibus felis. Integer pharetra est nunc, nec pretium
                    <br />
                    nunc pretium ac.
                  </HeroText>
                  <HeroLink>Learn more »</HeroLink>
                </Hero>
                <Aside>
                  <Widget>
                    <WidgetTitle $h={39}>Widget Header</WidgetTitle>
                    {[1, 2, 3, 4, 5].map((n) => <WidgetLink key={n}>Widget Link</WidgetLink>)}
                  </Widget>
                  <Widget>
                    <WidgetTitle $h={38}>Widget Text</WidgetTitle>
                    <WidgetText>
                      Vestibulum lorem elit, iaculis
                      <br />
                      innisl volutpat, malesuada
                    </WidgetText>
                  </Widget>
                </Aside>
              </Container>
            </Document>
            <ScrollTrack>
              <ScrollArrow />
              <ScrollThumb />
              <Spacer />
              <ScrollArrow down />
            </ScrollTrack>
          </Viewport>
        </MainColumn>

        <Rail>
          <Slot $w={44} $h={32}><BingIcon /></Slot>
          <Slot $w={44} $h={4} />
          {railIcons.map((Icon, i) => (
            <Slot key={i} $w={44} $h={40}><Icon /></Slot>
          ))}
          <Slot $w={44} $h={47}><Slot $w={42}><PlusIcon s={11} /></Slot><Slot $w={2} /></Slot>
          <Spacer />
          <RailRule />
          <Slot $w={44} $h={40}><PanelIcon /></Slot>
          <Slot $w={44} $h={40}><GearIcon /></Slot>
        </Rail>
      </Workspace>

      <Taskbar>
        <Weather>
          <WeatherIcon />
          <Stack>
            <Label $size={11}>34°C</Label>
            <Label $size={11} $track={0.3} $color="#5a6668">Kabut</Label>
          </Stack>
        </Weather>
        <StartIcon />
        <SearchBox>
          <Line w={16} h={16} sw={1.9} color="#242424">
            <circle cx="7" cy="7" r="5.600" /><path d="M11.200 11.200l3.800 3.800" />
          </Line>
          <SearchLabel $size={13} $color="#5d5d5d">Search</SearchLabel>
          <ForestArt />
        </SearchBox>
        {apps.map(({ name, icon: Icon, mode }) => (
          <AppButton key={name} $active={mode === "active"}>
            <Icon />
            <RunMark $mode={mode} />
          </AppButton>
        ))}
        <TrayItem $gap={24}><Line w={10} h={6} sw={1.3}><path d="M.5 5.500L5 1l4.500 4.500" /></Line></TrayItem>
        <TrayItem $gap={19}>
          <Glyph width="17" height="12" viewBox="0 0 17 12">
            <path d="M4 11.200a3.500 3.500 0 0 1-.5-6.900A5 5 0 0 1 12.700 3.500a3.900 3.900 0 0 1 .3 7.700z" fill="#eee" stroke="#222" strokeWidth="1.200" />
            <path d="M3.700 4.700A4.700 4.700 0 0 1 12.200 4c-2 .5-3 2.500-5 5-1.300 1-3.500 1.600-5 .5C1 8 1.500 5.500 3.700 4.700z" fill="#8e8f90" />
          </Glyph>
        </TrayItem>
        <TrayItem $gap={18}><Label $size={11} $track={0.1}>ENG</Label></TrayItem>
        <TrayItem $gap={18}>
          <Line w={16} h={12} sw={1.3}>
            <path d="M.7 4A10.300 10.300 0 0 1 15.300 4M3 6.500a7 7 0 0 1 10 0M5.300 8.800a3.800 3.800 0 0 1 5.400 0" />
            <circle cx="8" cy="10.700" r=".8" fill="#1b1b1b" />
          </Line>
        </TrayItem>
        <TrayItem $gap={8}>
          <Line w={15} h={12} sw={1.1}>
            <path d="M.6 4h2.200L6.500.8v10.400L2.800 8H.6zM8.700 4a3 3 0 0 1 0 4M10.700 2.300a5.300 5.300 0 0 1 0 7.400" />
            <path d="M12.800 .8a7.500 7.500 0 0 1 0 10.400" opacity=".35" />
          </Line>
        </TrayItem>
        <TrayItem $gap={9}>
          <Line w={16} h={10} sw={1.2}>
            <rect x=".6" y=".6" width="13" height="8.800" rx="2" />
            <rect x="2.700" y="2.600" width="7.500" height="4.800" rx=".5" fill="#111" stroke="none" />
            <path d="M15.300 3.500v3" strokeWidth="1.500" />
          </Line>
        </TrayItem>
        <Spacer />
        <Stack $align="flex-end">
          <Label $size={11} $track={0.25}>10:34 AM</Label>
          <Label $size={11} $track={0.3}>10/16/2023</Label>
        </Stack>
        <Slot $w={32}>
          <Glyph width="13" height="15" viewBox="0 0 13 15" fill="#033f96">
            <path d="M6.500 0A5 5 0 0 1 11.500 5v4l1.300 2.300c.2.500 0 .9-.5.900H.7c-.5 0-.7-.4-.5-.9L1.500 9V5A5 5 0 0 1 6.500 0zM4.300 13h4.400a2.200 2 0 0 1-4.400 0z" />
          </Glyph>
        </Slot>
        <Slot $w={12} />
      </Taskbar>
    </Screen>
  );
}
